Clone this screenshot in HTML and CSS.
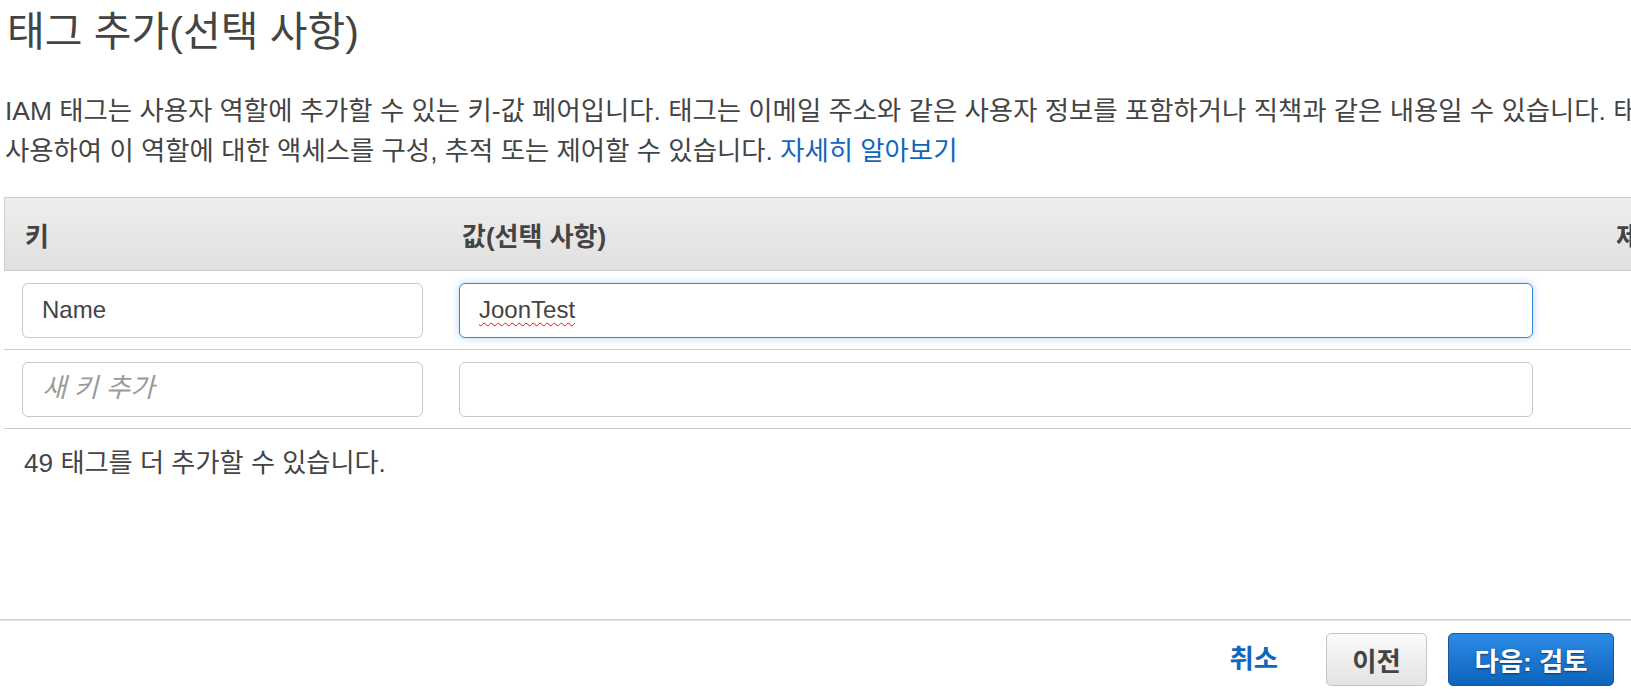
FILE: index.html
```html
<!DOCTYPE html>
<html lang="ko">
<head>
<meta charset="utf-8">
<title>태그 추가</title>
<link rel="stylesheet" href="styles.css">
</head>
<body>
<div class="page">
  <main class="content">
    <h1 class="title">태그 추가(선택 사항)</h1>
    <p class="desc">IAM 태그는 사용자 역할에 추가할 수 있는 키-값 페어입니다. 태그는 이메일 주소와 같은 사용자 정보를 포함하거나 직책과 같은 내용일 수 있습니다. 태그를<br>사용하여 이 역할에 대한 액세스를 구성, 추적 또는 제어할 수 있습니다. <a href="#" class="link">자세히 알아보기</a></p>

    <div class="tags">
      <div class="tags-head">
        <div class="col col-key">키</div>
        <div class="col col-val">값(선택 사항)</div>
        <div class="col col-rm">제거</div>
      </div>
      <div class="tags-row">
        <div class="col col-key"><input class="field" type="text" value="Name"></div>
        <div class="col col-val"><div class="field field-focus" role="textbox"><span class="misspelled">JoonTest</span></div></div>
        <div class="col col-rm"></div>
      </div>
      <div class="tags-row">
        <div class="col col-key"><input class="field" type="text" placeholder="새 키 추가"></div>
        <div class="col col-val"><input class="field" type="text"></div>
        <div class="col col-rm"></div>
      </div>
    </div>
    <p class="remaining">49 태그를 더 추가할 수 있습니다.</p>
  </main>
  <footer class="footer">
    <a href="#" class="cancel">취소</a>
    <button class="btn btn-prev" type="button">이전</button>
    <button class="btn btn-next" type="button">다음: 검토</button>
  </footer>
</div>
</body>
</html>
```

FILE: styles.css
```css
html, body {
  margin: 0;
  padding: 0;
  width: 1631px;
  height: 693px;
  overflow: hidden;
  background: #ffffff;
}

body {
  font-family: "Liberation Sans", "Noto Sans CJK KR", Arial, sans-serif;
  color: #444444;
}

.page {
  display: flex;
  flex-direction: column;
  height: 693px;
}

.content {
  flex: 1;
  padding-left: 4px;
  width: 1760px;
}

.title {
  margin: 0;
  padding: 9px 0 0 3px;
  font-size: 41px;
  font-weight: normal;
  line-height: 46px;
  color: #444444;
}

.desc {
  margin: 36px 0 0 1px;
  font-size: 26.4px;
  line-height: 40px;
}

.link {
  color: #1166bb;
  text-decoration: none;
}

.tags {
  margin-top: 26px;
  width: 1720px;
}

.tags-head {
  display: flex;
  align-items: center;
  height: 72px;
  border: 1px solid #cccccc;
  border-right: none;
  background: linear-gradient(#eeeeee, #e0e0e0);
  font-size: 26px;
  font-weight: bold;
  color: #444444;
}

.tags-row {
  display: flex;
  align-items: center;
  height: 78px;
  border-bottom: 1px solid #cccccc;
}

.col-key {
  width: 437px;
  box-sizing: border-box;
  padding-left: 18px;
}

.col-val {
  width: 1110px;
  box-sizing: border-box;
  padding-left: 18px;
  padding-right: 18px;
}

.tags-head .col-key {
  padding-left: 20px;
}

.tags-head .col-val {
  padding-left: 20px;
}

.col-rm {
  flex: 1;
  padding-left: 64px;
}

.field {
  display: block;
  box-sizing: border-box;
  width: 100%;
  height: 55px;
  margin: 0;
  padding: 0 0 0 19px;
  border: 1px solid #c8c8c8;
  border-radius: 6px;
  background: #ffffff;
  font-family: "Liberation Sans", "Noto Sans CJK KR", Arial, sans-serif;
  font-size: 24px;
  color: #444444;
  outline: none;
}

.col-key .field {
  width: 401px;
}

.field::placeholder {
  color: #9a9a9a;
  font-style: italic;
  font-size: 26.6px;
}

.field-focus {
  display: flex;
  align-items: center;
  border-color: #3584dc;
  box-shadow: 0 0 9px rgba(46, 132, 230, 0.35);
}

.misspelled {
  text-decoration: underline wavy #e01010;
  text-decoration-thickness: 1px;
  text-underline-offset: 4px;
}

.remaining {
  margin: 0;
  padding: 19px 0 0 20px;
  font-size: 26.2px;
  line-height: 30px;
}

.footer {
  display: flex;
  align-items: flex-start;
  justify-content: flex-end;
  height: 74px;
  border-top: 1px solid #cfcfcf;
  box-shadow: inset 0 1px 0 #e6e6e6;
  padding: 13px 17px 0 0;
  box-sizing: border-box;
}

.cancel {
  font-size: 26.4px;
  font-weight: bold;
  color: #1166bb;
  text-decoration: none;
  margin-right: 48px;
  line-height: 53px;
}

.btn {
  height: 53px;
  border-radius: 5px;
  font-family: "Liberation Sans", "Noto Sans CJK KR", Arial, sans-serif;
  font-size: 26.4px;
  font-weight: bold;
  padding: 0;
  cursor: pointer;
}

.btn-prev {
  width: 101px;
  border: 1px solid #c4c4c4;
  background: linear-gradient(#fbfbfb, #e3e3e3);
  color: #444444;
  margin-right: 21px;
}

.btn-next {
  width: 166px;
  border: 1px solid #1a5597;
  background: linear-gradient(#2c8ae6, #0d63bb);
  color: #ffffff;
  text-shadow: 0 1px 2px rgba(0, 0, 0, 0.5);
}
```
